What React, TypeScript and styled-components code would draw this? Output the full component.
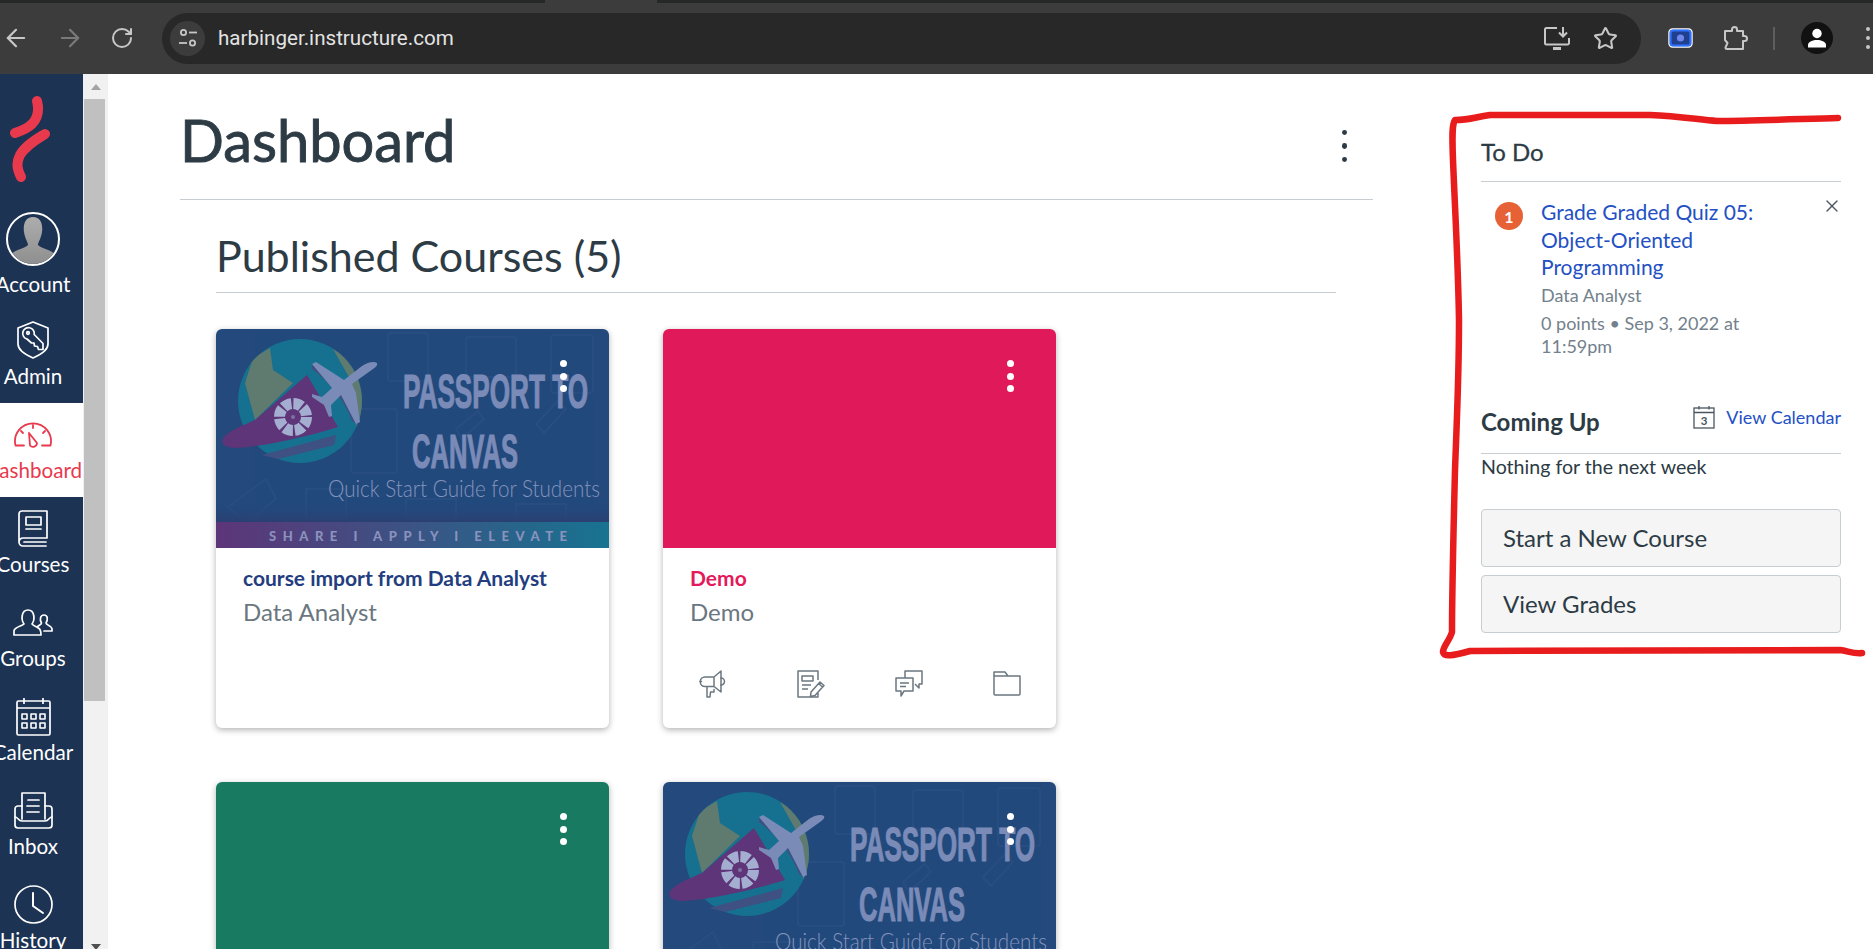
import React from "react";
import styled, { createGlobalStyle } from "styled-components";
import { ArrowLeft, ArrowRight, RotateCw, Star, X } from "lucide-react";

const Global = createGlobalStyle`
  html, body { margin: 0; padding: 0; height: 100%; overflow: hidden; background: #fff; }
  #root { height: 100%; }
  * { box-sizing: border-box; }
`;

const Page = styled.div`
  position: relative; width: 1873px; height: 949px; overflow: hidden;
  display: flex; flex-direction: column;
  font-family: Lato, "Open Sans", sans-serif; color: #2d3b45;
`;

/* ---------- browser chrome ---------- */
const TabStrip = styled.div`
  height: 3px; flex: none; background: #252827; display: flex; padding-left: 545px;
`;
const TabNeck = styled.div`width: 112px; background: #3c3c3c;`;
const Toolbar = styled.div`
  height: 71px; flex: none; background: #3c3c3c; display: flex; align-items: center;
  padding-left: 2px; padding-bottom: 1px;
`;
const NavButton = styled.div<{ $dim?: boolean }>`
  width: 54px; height: 40px; flex: none; display: flex; align-items: center; justify-content: flex-start;
  color: ${p => (p.$dim ? "#7a7a7a" : "#c7c7c7")};
`;
const Omnibox = styled.div`
  width: 1479px; height: 51px; margin-left: -2px; flex: none; background: #282828; border-radius: 26px;
  display: flex; align-items: center; padding: 0 8px;
`;
const SiteInfo = styled.div`
  width: 35px; height: 35px; border-radius: 50%; background: #3c3c3c; display: flex;
  align-items: center; justify-content: center; flex: none;
`;
const Url = styled.span`
  margin-left: 13px; font: 20.6px Roboto, "Open Sans", sans-serif; color: #e3e3e3; flex: 1;
`;
const OmniIcons = styled.div`display: flex; align-items: center; gap: 23px; margin-right: 15px; color: #c7c7c7;`;
const ChromeRight = styled.div`display: flex; align-items: center; margin-left: 27px; color: #c7c7c7;`;
const ChromeGap = styled.span`width: 30px; flex: none;`;
const Divider = styled.div`width: 2px; height: 23px; background: #5e5e5e; margin: 0 26px 0 25px;`;
const Profile = styled.div`
  width: 32px; height: 32px; border-radius: 50%; background: #111; display: flex; align-items: center; justify-content: center;
  overflow: hidden; flex: none;
`;
const ChromeDots = styled.div`
  margin-left: 33px; display: flex; flex-direction: column; gap: 5px;
`;
const ChromeDot = styled.i`display: block; width: 4px; height: 4px; border-radius: 50%; background: #c7c7c7;`;

/* ---------- body ---------- */
const Shell = styled.div`flex: 1; display: flex; min-height: 0;`;
const SideNav = styled.nav`width: 83px; flex: none; background: #1c3354; overflow: hidden;`;
const NavColumn = styled.div`width: 102px; margin-left: -18px; display: flex; flex-direction: column;`;
const LogoBox = styled.div`height: 138px; padding-top: 21px; padding-left: 26px;`;
const NavItem = styled.div<{ $active?: boolean; $account?: boolean }>`
  height: ${p => (p.$account ? "97px" : "94px")};
  padding-top: ${p => (p.$account ? "0" : "11px")};
  display: flex; flex-direction: column; align-items: center;
  background: ${p => (p.$active ? "#fff" : "transparent")};
  color: ${p => (p.$active ? "#e8394d" : "#fff")};
`;
const NavIconBox = styled.div`height: 40px; display: flex; align-items: center; justify-content: center;`;
const NavLabel = styled.div<{ $account?: boolean }>`
  margin-top: ${p => (p.$account ? "6px" : "4px")};
  font-size: 20.6px; line-height: 24px; white-space: nowrap;
`;
const Avatar = styled.div`
  width: 54px; height: 54px; border-radius: 50%; border: 2.5px solid #fff; overflow: hidden; flex: none;
  background: #1c3354; display: flex; align-items: flex-end; justify-content: center;
`;

const ScrollTrack = styled.div`
  width: 25px; flex: none; background: #f1f1f1; display: flex; flex-direction: column; align-items: center;
`;
const ScrollButton = styled.div`height: 25px; flex: none; display: flex; align-items: center; justify-content: center;`;
const ScrollThumb = styled.div`width: 21px; height: 602px; background: #c0c0c0; flex: none; margin-left: -2px;`;
const ScrollFill = styled.div`flex: 1;`;
const ArrowUp = styled.i`
  display: block; width: 0; height: 0; border-left: 5px solid transparent; border-right: 5px solid transparent;
  border-bottom: 6px solid #a3a3a3;
`;
const ArrowDown = styled.i`
  display: block; width: 0; height: 0; margin-top: 20px; border-left: 5px solid transparent; border-right: 5px solid transparent;
  border-top: 6px solid #505050;
`;

const Main = styled.main`flex: 1; display: flex; padding-left: 72px; min-width: 0;`;
const LeftColumn = styled.div`width: 1193px; flex: none;`;
const HeaderRow = styled.header`
  height: 126px; padding-top: 36px; display: flex; justify-content: space-between; border-bottom: 1px solid #c7cdd1;
`;
const PageTitle = styled.h1`
  margin: 0; font-size: 57.8px; line-height: 60px; font-weight: 400; color: #2d3b45; -webkit-text-stroke: 0.9px #2d3b45;
`;
const PageKebab = styled.div`
  margin: 20px 26px 0 0; display: flex; flex-direction: column; gap: 8px; height: 32px;
`;
const DarkDot = styled.i`display: block; width: 5.5px; height: 5.5px; border-radius: 50%; background: #2d3b45;`;

const CoursesSection = styled.section`padding: 0 37px 0 36px;`;
const SectionTitle = styled.h2`
  margin: 0; padding: 31px 0 12px; border-bottom: 1px solid #c7cdd1;
  font-size: 43px; line-height: 49px; font-weight: 400; color: #2d3b45;
`;
const CardGrid = styled.div`
  margin-top: 36px; display: grid; grid-template-columns: 393px 393px; gap: 54px;
`;
const Card = styled.article`
  position: relative; height: 399px; border-radius: 6px; background: #fff;
  box-shadow: 0 2px 6px rgba(0, 0, 0, 0.3); display: flex; flex-direction: column; overflow: hidden;
`;
const Hero = styled.div<{ $color: string }>`height: 219px; flex: none; background: ${p => p.$color};`;
const HeroArt = styled.svg`display: block; width: 393px; height: 219px;`;
const CardKebab = styled.div`
  position: absolute; top: 31px; left: 344px; display: flex; flex-direction: column; gap: 5.5px;
`;
const WhiteDot = styled.i`display: block; width: 7px; height: 7px; border-radius: 50%; background: #fff;`;
const CardBody = styled.div`flex: 1; padding: 18px 27px 0; display: flex; flex-direction: column;`;
const CardTitle = styled.div<{ $color: string }>`
  font-size: 21px; line-height: 24px; font-weight: 700; color: ${p => p.$color};
`;
const CardSub = styled.div`margin-top: 7px; font-size: 24px; line-height: 30px; color: #6b7780;`;
const CardActions = styled.div`
  margin: auto 0 0 9px; padding-bottom: 30px; display: flex; gap: 70px; color: #6b7780;
`;

const RightColumn = styled.aside`width: 360px; margin-left: 108px; flex: none; padding-top: 63px;`;
const SideHeading = styled.h3`
  margin: 0; font-size: 24px; line-height: 30px; font-weight: 400; color: #2d3b45; -webkit-text-stroke: 0.3px #2d3b45;
`;
const ToDoHeader = styled.div`padding-bottom: 14px; border-bottom: 1px solid #c7cdd1;`;
const ToDoItem = styled.div`position: relative; display: flex; padding: 16px 0 0 14px;`;
const Badge = styled.div`
  width: 28px; height: 28px; margin-top: 4px; border-radius: 50%; background: #e66135; color: #fff; flex: none;
  font-size: 16px; font-weight: 700; display: flex; align-items: center; justify-content: center;
`;
const ToDoContent = styled.div`width: 250px; margin-left: 18px;`;
const ToDoLink = styled.a`display: block; font-size: 21px; line-height: 27.5px; color: #2350c4;`;
const Muted = styled.div<{ $top: number }>`
  margin-top: ${p => p.$top}px; font-size: 18px; line-height: 23px; color: #73818c;
`;
const CloseBox = styled.div`position: absolute; top: 14px; right: -1px; color: #4a5660; line-height: 0;`;
const ComingHeader = styled.div`
  margin-top: 49px; padding-bottom: 16px; border-bottom: 1px solid #c7cdd1;
  display: flex; justify-content: space-between; align-items: flex-start;
`;
const BoldHeading = styled(SideHeading)`font-weight: 700; -webkit-text-stroke: 0;`;
const CalendarLink = styled.a`
  display: flex; align-items: center; gap: 11px; color: #2350c4; font-size: 18px; line-height: 22px;
  margin-top: -2px;
`;
const Nothing = styled.div`padding-top: 1px; font-size: 19.6px; line-height: 24px; color: #2d3b45;`;
const SideButton = styled.div`
  height: 58px; margin-top: 8px; padding-left: 21px; border: 1px solid #c7cdd1; border-radius: 4px;
  background: #f5f5f5; font-size: 24px; display: flex; align-items: center; color: #2d3b45;
`;
const Buttons = styled.div`margin-top: 30px;`;
const Annotation = styled.svg`position: absolute; left: 0; top: 0; width: 1873px; height: 949px; pointer-events: none;`;

/* ---------- drawings ---------- */
const s = { fill: "none", stroke: "currentColor", strokeLinecap: "round" as const, strokeLinejoin: "round" as const };

const Logo = () => (
  <svg width="44" height="88" viewBox="0 0 44 88" fill="none" stroke="#e8394d" strokeWidth="10" strokeLinecap="round">
    <path d="M29 6 C31 14 31 22 24 29 C19 34 13 36 7 38" />
    <path d="M37 39 C29 44 18 50 12 60 C8 68 9 74 13 82" />
  </svg>
);
const AdminIcon = () => (
  <svg width="32" height="38" viewBox="0 0 32 38" {...s} strokeWidth="1.7">
    <path d="M16 1 L31 7 V23 C31 30 23 34 16 37 C9 34 1 30 1 23 V7 Z" />
    <path d="M17.2 13.5 A5.8 5.8 0 1 0 10 18 L14.5 22 L17 22 L17.5 25 L20.5 25.5 L21.5 28.5 H26 V22.5 Z" />
    <circle cx="11" cy="12" r="1.3" />
  </svg>
);
const GaugeIcon = () => (
  <svg width="40" height="28" viewBox="0 0 40 28" {...s} strokeWidth="1.8">
    <path d="M11 25.5 H2.5 A18 18 0 1 1 37.5 25.5 H29" />
    <path d="M20 5 V8 M8 11 L10 13 M32 11 L30 13" />
    <path d="M16 13 L24 23 A4 4 0 0 1 17 25.5 Z" />
  </svg>
);
const BookIcon = () => (
  <svg width="30" height="37" viewBox="0 0 30 37" {...s} strokeWidth="1.7">
    <path d="M29 1 H4 A3 3 0 0 0 1 4 V32 A4 4 0 0 0 5 36 H28 M29 1 V28 H5 A4 4 0 0 0 1 32" />
    <path d="M6 32 H28" />
    <rect x="8" y="7" width="15" height="8" />
    <path d="M8 19 H23" />
  </svg>
);
const GroupIcon = () => (
  <svg width="40" height="27" viewBox="0 0 40 27" {...s} strokeWidth="1.7">
    <path d="M1 26 V22 C1 18 9 17 11 15 C8 11 8 1 15 1 C22 1 22 11 19 15 C21 17 24 18 26 19.5 C28 21 28 23 28 26 Z" />
    <path d="M31 22 H39 V20 C39 17 33 16 33 14 C35 11 35 6 31 6 C27 6 26.5 11 28.5 14 C28.5 15.5 26 16.5 24.5 17.5" />
  </svg>
);
const CalendarIcon = () => (
  <svg width="35" height="39" viewBox="0 0 35 39" {...s} strokeWidth="1.7" strokeLinecap="butt">
    <rect x="1" y="4" width="33" height="34" rx="1.5" />
    <path d="M1 11 H34 M8 1 V7 M27 1 V7" />
    <g strokeWidth="1.6">
      <rect x="6" y="17" width="5" height="5" /><rect x="15" y="17" width="5" height="5" /><rect x="24" y="17" width="5" height="5" />
      <rect x="6" y="26" width="5" height="5" /><rect x="15" y="26" width="5" height="5" /><rect x="24" y="26" width="5" height="5" />
    </g>
  </svg>
);
const InboxIcon = () => (
  <svg width="39" height="37" viewBox="0 0 39 37" {...s} strokeWidth="1.7">
    <path d="M8 27 V1 H31 V27 M14 8 H25 M13 14 H25 M13 20 H25" />
    <path d="M8 14 H4 A3 3 0 0 0 1 17 V33 A3 3 0 0 0 4 36 H35 A3 3 0 0 0 38 33 V17 A3 3 0 0 0 35 14 H31" />
    <path d="M1 25 C4 25 4 29 8 29 H31 C35 29 35 25 38 25" />
  </svg>
);
const ClockIcon = () => (
  <svg width="39" height="39" viewBox="0 0 39 39" {...s} strokeWidth="1.7">
    <circle cx="19.5" cy="19.5" r="18.5" />
    <path d="M19 8 V21 L29 28" strokeWidth="2" />
  </svg>
);
const Megaphone = () => (
  <svg width="28" height="28" viewBox="0 0 28 28" {...s} strokeWidth="1.5">
    <path d="M22 1 V22 L15 16.5 H6 A4 4 0 0 1 6 7 H15 Z M15 7 V16.5" />
    <path d="M22 8 A3.5 3.5 0 0 1 22 15 M2.5 11.5 H1 M8 17 L8 27 H11 L11.5 22 H15 L15 19.5" />
  </svg>
);
const AssignmentIcon = () => (
  <svg width="28" height="28" viewBox="0 0 28 28" {...s} strokeWidth="1.5" strokeLinecap="butt">
    <path d="M21 10 V1 H1 V27 H21 V23" />
    <rect x="5" y="6" width="11" height="5" />
    <path d="M5 15 H14 M5 19 H11" />
    <path d="M14 22 L23 12 L27 15.5 L18 25.5 L13.5 26.5 Z M21.5 13.5 L25.5 17" />
  </svg>
);
const DiscussionIcon = () => (
  <svg width="28" height="28" viewBox="0 0 28 28" {...s} strokeWidth="1.5" strokeLinecap="butt">
    <path d="M1 8 H18 V21 H9 L6 26 V21 H1 Z" />
    <path d="M5 13 H14 M5 16.5 H11" />
    <path d="M10 8 V1 H27 V14 H24 V18 L20 14" />
  </svg>
);
const FolderIcon = () => (
  <svg width="28" height="26" viewBox="0 0 28 26" {...s} strokeWidth="1.5">
    <path d="M1 2 H12 L15 6 H27 V24 A1 1 0 0 1 26 25 H2 A1 1 0 0 1 1 24 Z M1 6 H15" />
  </svg>
);
const PersonBlock = () => (
  <svg width="50" height="50" viewBox="0 0 50 50">
    <defs>
      <linearGradient id="avatarFill" x1="0" x2="0" y1="0" y2="1">
        <stop offset="0" stopColor="#adadad" /><stop offset="1" stopColor="#8f8f8f" />
      </linearGradient>
    </defs>
    <path fill="url(#avatarFill)" d="M25 3 C33 3 35 11 34 18 C33 25 30 28 30 31 C32 34 42 35 48 41 V50 H2 V41 C8 35 18 34 20 31 C20 28 17 25 16 18 C15 11 17 3 25 3 Z" />
  </svg>
);
const TuneGlyph = () => (
  <svg width="20" height="20" viewBox="0 0 20 20" fill="none" stroke="#c7c7c7" strokeWidth="1.8">
    <circle cx="5.5" cy="4.5" r="2.6" /><path d="M11 4.5 H19" />
    <circle cx="14.5" cy="15" r="2.6" /><path d="M1 15 H9" />
  </svg>
);
const InstallGlyph = () => (
  <svg width="26" height="24" viewBox="0 0 26 24" fill="none" stroke="currentColor" strokeWidth="2">
    <path d="M13 2 H2.5 A1.5 1.5 0 0 0 1 3.5 V17 A1.5 1.5 0 0 0 2.5 18.5 H23.5 A1.5 1.5 0 0 0 25 17 V12" />
    <path d="M9 22.5 H17" strokeWidth="3" />
    <path d="M19 1 V10 M15 6.5 L19 10.5 L23 6.5" />
  </svg>
);
const ShareGlyph = () => (
  <svg width="25" height="20" viewBox="0 0 25 20">
    <rect x="1" y="1" width="23" height="18" rx="3.5" fill="#1f3f8f" stroke="#fff" strokeWidth="1.4" />
    <rect x="2.6" y="2.6" width="19.8" height="14.8" rx="2.5" fill="none" stroke="#2f72ff" strokeWidth="2" />
    <circle cx="12.5" cy="10" r="3.6" fill="#6f86ea" />
  </svg>
);
const PuzzleGlyph = () => (
  <svg width="25" height="25" viewBox="0 0 25 25" fill="none" stroke="currentColor" strokeWidth="2" strokeLinejoin="round">
    <path d="M2 5 H9 V3.5 A2.5 2.5 0 0 1 14 3.5 V5 H20 V10 H21.5 A2.5 2.5 0 0 1 21.5 15 H20 V23 H4 A1.5 1.5 0 0 1 2.5 21.5 L4.5 17 L2 14 Z" />
  </svg>
);
const ProfileGlyph = () => (
  <svg width="24" height="24" viewBox="0 0 24 24" fill="#fff">
    <circle cx="12" cy="7.5" r="4.7" />
    <path d="M3 21.5 V19 C3 15.5 8 14 12 14 C16 14 21 15.5 21 19 V21.5 Z" />
  </svg>
);
const SmallCal = () => (
  <svg width="22" height="24" viewBox="0 0 22 24" fill="none" stroke="#4a5660" strokeWidth="1.3">
    <rect x="1" y="3" width="20" height="20" />
    <path d="M1 7.5 H21 M6 1 V4.5 M16 1 V4.5" />
    <text x="11" y="20" textAnchor="middle" fontFamily="Lato, sans-serif" fontSize="11.5" fontWeight="700" fill="#4a5660" stroke="none">3</text>
  </svg>
);

const PassportArt = ({ id }: { id: string }) => (
  <HeroArt viewBox="0 0 393 219">
    <defs>
      <clipPath id={id}><circle cx="84" cy="72" r="62" /></clipPath>
      <linearGradient id={`${id}b`} x1="0" x2="1" y1="0" y2="0">
        <stop offset="0" stopColor="#5d3578" /><stop offset="1" stopColor="#187391" />
      </linearGradient>
      <linearGradient id={`${id}s`} x1="0" x2="0" y1="0" y2="1">
        <stop offset="0" stopColor="#23497d" stopOpacity="0" /><stop offset="1" stopColor="#2b3f72" />
      </linearGradient>
    </defs>
    <g fill="none" stroke="#2f5488" strokeWidth="2" opacity=".45">
      <rect x="172" y="4" width="40" height="48" rx="3" /><rect x="250" y="8" width="50" height="40" rx="3" />
      <rect x="335" y="6" width="42" height="58" rx="3" /><rect x="135" y="80" width="46" height="64" rx="3" />
      <path d="M240 100 L262 82 L268 90 L246 110 Z M320 95 L342 72 L350 80 L328 104 Z" />
      <path d="M12 178 L50 150 L60 170 L30 194 Z M90 160 H130 V190 H90 Z M190 170 H240 V190 H190 Z M300 175 H350 V192 H300 Z" />
    </g>
    <circle cx="84" cy="72" r="62" fill="#16708f" />
    <g clipPath={`url(#${id})`} fill="#5f7a6e">
      <path d="M54 19 L37 29 L29 54 L39 91 L77 54 L57 41 Z" />
      <path d="M117 20 L148 38 L152 71 L141 99 L137 80 L134 50 Z" />
    </g>
    <path d="M46 126 L120 106 L118 116 L62 130 Z" fill="#3f5083" />
    <path d="M91 46 L122 98 C90 108 46 118 20 119 C7 119 3 113 9 107 C16 100 28 96 39 91 Z" fill="#5d3578" />
    <circle cx="77" cy="88" r="13.5" fill="none" stroke="#a4aed0" strokeWidth="11" strokeDasharray="8.6 2" />
    <circle cx="77" cy="88" r="2" fill="#a4aed0" opacity=".5" />
    <path d="M96 36 C115 44 135 62 142 96 L136 92 C128 70 112 52 96 40 Z" fill="#3f5083" />
    <path d="M161 34 C158 32 152 33 146 37 L128 51 L100 33 L96 35 L116 59 L106 68 L96 65 L96 68 L108 76 L113 88 L116 87 L115 76 L125 66 L140 95 L144 93 L140 64 L136 55 L157 40 C160 38 162 36 161 34 Z" fill="#7b8bb8" />
    <text x="187" y="79" textLength="185" lengthAdjust="spacingAndGlyphs" fontFamily="'Liberation Sans', sans-serif" fontWeight="700" fontSize="48" fill="#7b8bb8" stroke="#7b8bb8" strokeWidth="1.2">PASSPORT TO</text>
    <text x="196" y="139" textLength="106" lengthAdjust="spacingAndGlyphs" fontFamily="'Liberation Sans', sans-serif" fontWeight="700" fontSize="48" fill="#7b8bb8" stroke="#7b8bb8" strokeWidth="1.2">CANVAS</text>
    <text x="112" y="168" textLength="272" lengthAdjust="spacingAndGlyphs" fontFamily="Lato, sans-serif" fontWeight="300" fontSize="23" fill="#8494bd">Quick Start Guide for Students</text>
    <rect x="0" y="172" width="393" height="21" fill={`url(#${id}s)`} />
    <rect x="0" y="193" width="393" height="26" fill={`url(#${id}b)`} />
    <text x="53" y="212" textLength="298" fontFamily="Lato, sans-serif" fontWeight="900" fontSize="13" fill="#8a92bd">SHARE  I  APPLY  I  ELEVATE</text>
  </HeroArt>
);

const Kebab = () => (
  <CardKebab><WhiteDot /><WhiteDot /><WhiteDot /></CardKebab>
);

const navItems: { label: string; icon: React.ReactNode; active?: boolean }[] = [
  { label: "Admin", icon: <AdminIcon /> },
  { label: "Dashboard", icon: <GaugeIcon />, active: true },
  { label: "Courses", icon: <BookIcon /> },
  { label: "Groups", icon: <GroupIcon /> },
  { label: "Calendar", icon: <CalendarIcon /> },
  { label: "Inbox", icon: <InboxIcon /> },
  { label: "History", icon: <ClockIcon /> },
];

export default function App() {
  return (
    <Page>
      <Global />
      <TabStrip><TabNeck /></TabStrip>
      <Toolbar>
        <NavButton><ArrowLeft size={28} strokeWidth={1.9} /></NavButton>
        <NavButton $dim><ArrowRight size={28} strokeWidth={1.9} /></NavButton>
        <NavButton><RotateCw size={24} strokeWidth={2} /></NavButton>
        <Omnibox>
          <SiteInfo><TuneGlyph /></SiteInfo>
          <Url>harbinger.instructure.com</Url>
          <OmniIcons>
            <InstallGlyph />
            <Star size={25} strokeWidth={2} />
          </OmniIcons>
        </Omnibox>
        <ChromeRight>
          <ShareGlyph />
          <ChromeGap />
          <PuzzleGlyph />
          <Divider />
          <Profile><ProfileGlyph /></Profile>
          <ChromeDots><ChromeDot /><ChromeDot /><ChromeDot /></ChromeDots>
        </ChromeRight>
      </Toolbar>
      <Shell>
        <SideNav>
          <NavColumn>
            <LogoBox><Logo /></LogoBox>
            <NavItem $account>
              <Avatar><PersonBlock /></Avatar>
              <NavLabel $account>Account</NavLabel>
            </NavItem>
            {navItems.map(n => (
              <NavItem key={n.label} $active={n.active}>
                <NavIconBox>{n.icon}</NavIconBox>
                <NavLabel>{n.label}</NavLabel>
              </NavItem>
            ))}
          </NavColumn>
        </SideNav>
        <ScrollTrack>
          <ScrollButton><ArrowUp /></ScrollButton>
          <ScrollThumb />
          <ScrollFill />
          <ScrollButton><ArrowDown /></ScrollButton>
        </ScrollTrack>
        <Main>
          <LeftColumn>
            <HeaderRow>
              <PageTitle>Dashboard</PageTitle>
              <PageKebab><DarkDot /><DarkDot /><DarkDot /></PageKebab>
            </HeaderRow>
            <CoursesSection>
              <SectionTitle>Published Courses (5)</SectionTitle>
              <CardGrid>
                <Card>
                  <Hero $color="#23497d"><PassportArt id="artA" /></Hero>
                  <Kebab />
                  <CardBody>
                    <CardTitle $color="#233d80">course import from Data Analyst</CardTitle>
                    <CardSub>Data Analyst</CardSub>
                  </CardBody>
                </Card>
                <Card>
                  <Hero $color="#e01a5a" />
                  <Kebab />
                  <CardBody>
                    <CardTitle $color="#e31a5b">Demo</CardTitle>
                    <CardSub>Demo</CardSub>
                    <CardActions>
                      <Megaphone /><AssignmentIcon /><DiscussionIcon /><FolderIcon />
                    </CardActions>
                  </CardBody>
                </Card>
                <Card>
                  <Hero $color="#187a61" />
                  <Kebab />
                </Card>
                <Card>
                  <Hero $color="#23497d"><PassportArt id="artB" /></Hero>
                  <Kebab />
                </Card>
              </CardGrid>
            </CoursesSection>
          </LeftColumn>
          <RightColumn>
            <ToDoHeader><SideHeading>To Do</SideHeading></ToDoHeader>
            <ToDoItem>
              <Badge>1</Badge>
              <ToDoContent>
                <ToDoLink>Grade Graded Quiz 05: Object-Oriented Programming</ToDoLink>
                <Muted $top={3}>Data Analyst</Muted>
                <Muted $top={5}>0 points • Sep 3, 2022 at 11:59pm</Muted>
              </ToDoContent>
              <CloseBox><X size={20} strokeWidth={1.6} /></CloseBox>
            </ToDoItem>
            <ComingHeader>
              <BoldHeading>Coming Up</BoldHeading>
              <CalendarLink><SmallCal />View Calendar</CalendarLink>
            </ComingHeader>
            <Nothing>Nothing for the next week</Nothing>
            <Buttons>
              <SideButton>Start a New Course</SideButton>
              <SideButton>View Grades</SideButton>
            </Buttons>
          </RightColumn>
        </Main>
      </Shell>
      <Annotation viewBox="0 0 1873 949" fill="none" stroke="#e81c1c" strokeWidth="6.5" strokeLinecap="round" strokeLinejoin="round">
        <path d="M1838 118 C1800 119 1750 121 1717 121 C1700 120 1680 116 1650 115 L1490 115 C1475 117 1470 120 1455 120 C1452 124 1452 135 1453 160 C1455 210 1458 260 1459 320 C1459 380 1456 440 1455 470 C1454 510 1452 590 1452 632 C1450 640 1443 646 1443 652 C1444 657 1452 656 1470 651 L1840 650 C1848 651 1854 654 1862 653" />
      </Annotation>
    </Page>
  );
}
